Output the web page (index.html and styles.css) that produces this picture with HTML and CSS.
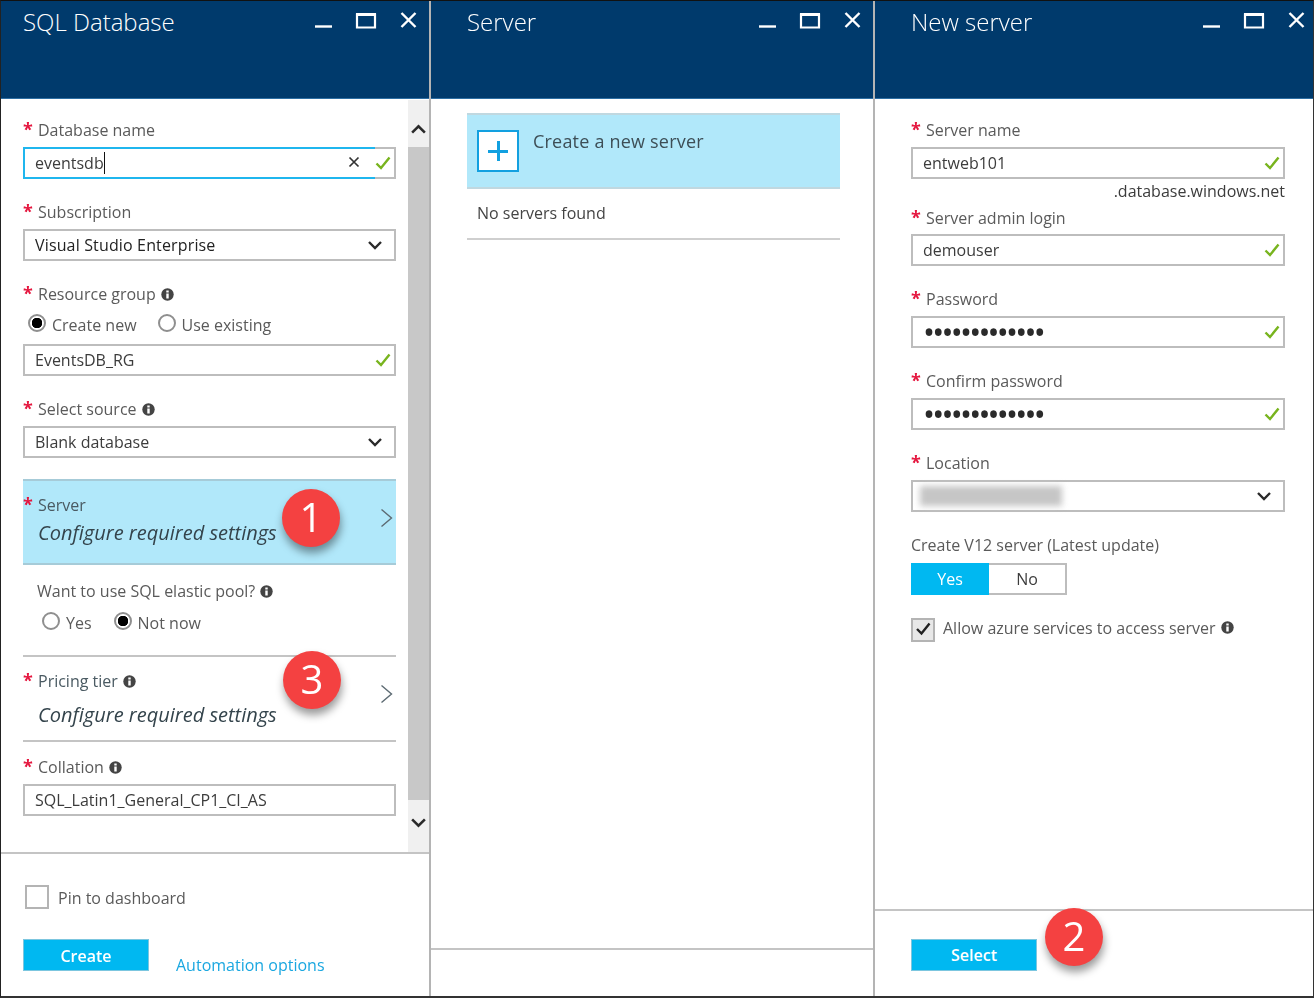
FILE: index.html
```html
<!DOCTYPE html>
<html>
  <head>
    <title>SQL Database</title>
    <meta charset="utf-8"/>
    <link rel="stylesheet" href="styles.css">
  </head>
  <body>
    <svg class="sprite" width="0" height="0">
      <symbol id="win" viewBox="0 0 102 20">
        <path d="M0 15.500h17" stroke="#fff" stroke-width="2.400" fill="none"/>
        <path d="M42 3.500h18v13h-18z" stroke="#fff" stroke-width="2.200" fill="none"/>
        <path d="M41 2h20v3h-20z" fill="#fff"/>
        <path d="M86.500 2l14 14M100.500 2l-14 14" stroke="#fff" stroke-width="2.400" fill="none"/>
      </symbol>
      <symbol id="check" viewBox="0 0 16 14">
        <path d="M1.500 7.500l4.500 4.500 8.500-10.500" stroke="#78b41e" stroke-width="2.400" fill="none"/>
      </symbol>
      <symbol id="clear" viewBox="0 0 12 12">
        <path d="M1.500 1.500l9 9M10.500 1.500l-9 9" stroke="#333" stroke-width="1.700" fill="none"/>
      </symbol>
      <symbol id="down" viewBox="0 0 16 10">
        <path d="M2 2l6 6 6-6" stroke="#2a2a2a" stroke-width="2.400" fill="none"/>
      </symbol>
      <symbol id="chev" viewBox="0 0 13 20">
        <path d="M1.500 1.500l10 8.500-10 8.500" stroke="#5c6a72" stroke-width="1.400" fill="none"/>
      </symbol>
      <symbol id="info" viewBox="0 0 13 13">
        <circle cx="6.500" cy="6.500" r="6.200" fill="#444"/>
        <path d="M5.300 2.500h2.400v2h-2.400zM5.300 5.500h2.400v5h-2.400z" fill="#fff"/>
      </symbol>
    </svg>

    <div class="desk">

      <section class="panel panel-db">
        <header class="head">
          <h1>SQL Database</h1>
          <svg class="win"><use href="#win"/></svg>
        </header>
        <div class="body">
          <div class="form">
            <div class="label first"><span class="star">*</span>Database name</div>
            <div class="input focus">
              <span class="caret">eventsdb</span>
              <svg class="clear"><use href="#clear"/></svg>
              <svg class="check"><use href="#check"/></svg>
            </div>

            <div class="label"><span class="star">*</span>Subscription</div>
            <div class="input strong">Visual Studio Enterprise<svg class="down"><use href="#down"/></svg></div>

            <div class="label"><span class="star">*</span>Resource group<svg class="info"><use href="#info"/></svg></div>
            <div class="radios">
              <span class="radio on">Create new</span>
              <span class="radio">Use existing</span>
            </div>
            <div class="input">EventsDB_RG<svg class="check"><use href="#check"/></svg></div>

            <div class="label"><span class="star">*</span>Select source<svg class="info"><use href="#info"/></svg></div>
            <div class="input">Blank database<svg class="down"><use href="#down"/></svg></div>

            <div class="blade active">
              <div>
                <div class="blade-label"><span class="star">*</span>Server</div>
                <div class="blade-note">Configure required settings</div>
              </div>
              <svg class="chev"><use href="#chev"/></svg>
            </div>

            <div class="pool">Want to use SQL elastic pool?<svg class="info"><use href="#info"/></svg></div>
            <div class="radios radios-pool">
              <span class="radio">Yes</span>
              <span class="radio on">Not now</span>
            </div>

            <div class="blade priced">
              <div>
                <div class="blade-label"><span class="star">*</span>Pricing tier<svg class="info"><use href="#info"/></svg></div>
                <div class="blade-note">Configure required settings</div>
              </div>
              <svg class="chev"><use href="#chev"/></svg>
            </div>

            <div class="label collation"><span class="star">*</span>Collation<svg class="info"><use href="#info"/></svg></div>
            <div class="input">SQL_Latin1_General_CP1_CI_AS</div>
          </div>
          <div class="scroll">
            <div class="scroll-btn up"><svg><use href="#down"/></svg></div>
            <div class="scroll-thumb"></div>
            <div class="scroll-btn dn"><svg><use href="#down"/></svg></div>
          </div>
        </div>
        <footer class="foot foot-db">
          <div class="pin"><span class="box"></span><span class="pin-text">Pin to dashboard</span></div>
          <div class="actions">
            <a class="btn">Create</a>
            <a class="link">Automation options</a>
          </div>
        </footer>
      </section>

      <section class="panel panel-list">
        <header class="head">
          <h1>Server</h1>
          <svg class="win"><use href="#win"/></svg>
        </header>
        <div class="body list">
          <div class="create">
            <span class="plus"></span>
            <span class="create-text">Create a new server</span>
          </div>
          <div class="empty">No servers found</div>
        </div>
        <footer class="foot foot-list"></footer>
      </section>

      <section class="panel panel-new">
        <header class="head">
          <h1>New server</h1>
          <svg class="win"><use href="#win"/></svg>
        </header>
        <div class="body form-new">
          <div class="label first"><span class="star">*</span>Server name</div>
          <div class="input">entweb101<svg class="check"><use href="#check"/></svg></div>
          <div class="suffix">.database.windows.net</div>

          <div class="label tight"><span class="star">*</span>Server admin login</div>
          <div class="input">demouser<svg class="check"><use href="#check"/></svg></div>

          <div class="label"><span class="star">*</span>Password</div>
          <div class="input"><span class="dots">•••••••••••••</span><svg class="check"><use href="#check"/></svg></div>

          <div class="label"><span class="star">*</span>Confirm password</div>
          <div class="input"><span class="dots">•••••••••••••</span><svg class="check"><use href="#check"/></svg></div>

          <div class="label"><span class="star">*</span>Location</div>
          <div class="input"><span class="smudge"></span><svg class="down"><use href="#down"/></svg></div>

          <div class="plain">Create V12 server (Latest update)</div>
          <div class="toggle">
            <span class="opt sel">Yes</span>
            <span class="opt">No</span>
          </div>

          <div class="allow">
            <span class="box ticked"><svg viewBox="0 0 16 14"><path d="M2 7l4.500 4.500 8-10" stroke="#222" stroke-width="2.400" fill="none"/></svg></span>
            Allow azure services to access server<svg class="info"><use href="#info"/></svg>
          </div>
        </div>
        <footer class="foot foot-new">
          <a class="btn">Select</a>
        </footer>
      </section>

      <div class="badge b1">1</div>
      <div class="badge b3">3</div>
      <div class="badge b2">2</div>
    </div>
  </body>
</html>
```

FILE: styles.css
```css
*, *::before {
  box-sizing: border-box;
}
html, body {
  margin: 0;
  height: 998px;
  overflow: hidden;
}
body {
  background: #fff;
  color: #5a5a5a;
  font-family: "Open Sans", "Noto Sans", sans-serif;
  font-size: 16px;
}
.sprite {
  position: absolute;
}
.desk {
  position: relative;
  display: flex;
  height: 998px;
  border-top: 1px solid #111;
  border-left: 1px solid #222;
  border-right: 1px solid #333;
  border-bottom: 2px solid #333;
  filter: blur(0.5px);
}
.panel {
  display: flex;
  flex-direction: column;
  border-right: 2px solid #b4b4b4;
}
.panel-db {
  width: 430px;
}
.panel-list {
  width: 444px;
}
.panel-new {
  width: 438px;
  border-right: 0;
}

/* header */
.head {
  display: flex;
  flex: none;
  height: 98px;
  background: #003a6c;
  border-bottom: 1px solid #2d6ea3;
  padding-left: 36px;
}
.panel-db .head {
  padding-left: 22px;
}
.head h1 {
  margin: 5px 0 0;
  color: #fff;
  font-size: 24px;
  font-weight: 300;
  line-height: 32px;
}
.win {
  width: 102px;
  height: 20px;
  margin: 10px 12px 0 auto;
}
.panel-new .win {
  margin-right: 8px;
}

/* form */
.body {
  display: flex;
  flex: 1;
  min-height: 0;
}
.form {
  width: 407px;
  padding: 0 12px 0 22px;
}
.label {
  display: flex;
  align-items: center;
  height: 20px;
  margin: 23px 0 7px;
  line-height: 20px;
  white-space: nowrap;
}
.label.first {
  margin-top: 21px;
}
.star {
  flex: none;
  width: 15px;
  margin-top: -2px;
  color: #e5173f;
  font-size: 18px;
  font-weight: 700;
  line-height: 20px;
}
.info {
  flex: none;
  width: 13px;
  height: 13px;
  margin-left: 5px;
}
.input {
  display: flex;
  align-items: center;
  height: 32px;
  padding-left: 10px;
  border: 2px solid #bdbdbd;
  color: #3c3c3c;
  white-space: nowrap;
}
.input.strong {
  color: #222;
  letter-spacing: 0.15px;
}
.input.focus {
  border-image: linear-gradient(to right, #1fb6ee 353px, #bdbdbd 353px) 1;
}
.caret {
  border-right: 1px solid #111;
}
.clear {
  flex: none;
  width: 12px;
  height: 12px;
  margin: -2px 15px 0 auto;
}
.check {
  flex: none;
  width: 16px;
  height: 14px;
  margin-left: auto;
  margin-right: 3px;
}
.clear + .check {
  margin-left: 0;
}
.down {
  flex: none;
  width: 16px;
  height: 10px;
  margin-left: auto;
  margin-right: 11px;
}

/* radios */
.radios {
  display: flex;
  gap: 21px;
  height: 20px;
  margin: 11px 0 9px 5px;
  line-height: 20px;
}
.radio {
  display: flex;
  align-items: center;
  gap: 6px;
}
.radio::before {
  content: "";
  flex: none;
  width: 18px;
  height: 18px;
  margin-top: -4px;
  border: 2px solid #8f8f8f;
  border-radius: 50%;
  background: #fff;
}
.radio.on::before {
  background: radial-gradient(circle, #000 0, #000 5px, #fff 5.500px);
}
.radios-pool {
  gap: 22px;
  margin: 12px 0 0 19px;
}

/* blades */
.blade {
  display: flex;
  justify-content: space-between;
  align-items: flex-start;
  padding-top: 14px;
  color: #4a5a62;
}
.blade.active {
  height: 86px;
  margin-top: 21px;
  background: #b1e8fa;
  border-top: 2px solid #a6cbd8;
  border-bottom: 2px solid #a6cbd8;
}
.blade.priced {
  height: 87px;
  margin-top: 22px;
  border-top: 2px solid #c4c4c4;
  border-bottom: 2px solid #c4c4c4;
}
.blade-label {
  display: flex;
  align-items: center;
  height: 20px;
}
.blade-note {
  margin: 4px 0 0 15px;
  color: #34444c;
  font-size: 20px;
  font-style: italic;
  line-height: 28px;
  white-space: nowrap;
}
.priced .blade-note {
  margin-top: 10px;
}
.chev {
  width: 13px;
  height: 20px;
  margin: 13px 3px 0 0;
}
.pool {
  display: flex;
  align-items: center;
  height: 20px;
  margin: 16px 0 0 14px;
}
.label.collation {
  margin-top: 15px;
}

/* scrollbar */
.scroll {
  display: flex;
  flex: none;
  flex-direction: column;
  width: 21px;
  margin-top: 1px;
  background: #f0f0f0;
}
.scroll-thumb {
  flex: 1;
  background: #c8c8c8;
}
.scroll-btn {
  display: flex;
  flex: none;
  justify-content: center;
  align-items: center;
  height: 47px;
}
.scroll-btn svg {
  width: 17px;
  height: 11px;
}
.scroll-btn.up {
  padding-top: 11px;
}
.scroll-btn.up svg {
  transform: scaleY(-1);
}
.scroll-btn.dn {
  height: 52px;
  padding-bottom: 8px;
}

/* footers */
.foot {
  flex: none;
  border-top: 2px solid #c4c4c4;
}
.foot-db {
  height: 144px;
  padding: 31px 22px 0;
}
.foot-list {
  height: 48px;
}
.foot-new {
  height: 87px;
  padding: 28px 0 0 36px;
}
.box {
  display: inline-block;
  flex: none;
  width: 24px;
  height: 24px;
  border: 2px solid #b4b4b4;
}
.pin {
  display: flex;
  align-items: center;
  gap: 9px;
  margin-left: 2px;
}
.pin-text {
  margin-top: 2px;
}
.actions {
  display: flex;
  margin-top: 30px;
}
.btn {
  display: block;
  width: 126px;
  height: 32px;
  background: #00b8f1;
  border: 1px solid #7cc6df;
  color: #fff;
  font-weight: 600;
  line-height: 30px;
  text-align: center;
}
.foot-db .btn {
  line-height: 33px;
}
.link {
  margin: 15px 0 0 27px;
  color: #1aa7e0;
  line-height: 22px;
  white-space: nowrap;
}

/* server list */
.list {
  flex-direction: column;
  padding: 14px 33px 0 36px;
}
.create {
  display: flex;
  gap: 14px;
  height: 76px;
  padding: 15px 0 0 10px;
  background: #b1e8fa;
  border-top: 2px solid #c0d8e0;
  border-bottom: 2px solid #c0d8e0;
  color: #3d4e56;
}
.plus {
  flex: none;
  width: 42px;
  height: 42px;
  border: 2px solid #12a0e0;
  background:
    linear-gradient(#12a0e0, #12a0e0) center / 20px 3px no-repeat,
    linear-gradient(#12a0e0, #12a0e0) center / 3px 20px no-repeat,
    #fff;
}
.create-text {
  margin-top: -1px;
  font-size: 18px;
  letter-spacing: 0.2px;
  line-height: 24px;
}
.empty {
  height: 51px;
  padding-left: 10px;
  border-bottom: 2px solid #cfcfcf;
  color: #444;
  line-height: 48px;
}

/* new server form */
.form-new {
  display: block;
  padding: 0 28px 0 36px;
}
.suffix {
  height: 22px;
  color: #3c3c3c;
  line-height: 24px;
  text-align: right;
}
.label.tight {
  margin: 7px 0 6px;
}
.dots {
  color: #2a2a2a;
  font-size: 32px;
  letter-spacing: -2.800px;
  line-height: 20px;
}
.smudge {
  width: 142px;
  height: 20px;
  margin-left: -3px;
  background: #c6c6c6;
  filter: blur(3px);
}
.plain {
  height: 20px;
  margin-top: 23px;
  line-height: 20px;
}
.toggle {
  display: flex;
  width: 156px;
  height: 32px;
  margin-top: 8px;
  border: 2px solid #bdbdbd;
  color: #3c3c3c;
  line-height: 28px;
  text-align: center;
}
.opt {
  flex: 1;
}
.opt.sel {
  flex: none;
  width: 78px;
  margin: -2px 0 -2px -2px;
  background: #00b8f1;
  color: #fff;
  line-height: 32px;
}
.allow {
  display: flex;
  align-items: flex-start;
  margin-top: 23px;
  line-height: 20px;
  white-space: nowrap;
}
.allow .info {
  margin-top: 3px;
}
.box.ticked {
  margin-right: 8px;
  padding: 2px;
  background: #e8e8e8;
}
.box.ticked svg {
  display: block;
}

/* callouts */
.badge {
  position: absolute;
  width: 58px;
  height: 58px;
  border-radius: 50%;
  background: #f44141;
  box-shadow: 1px 6px 8px rgba(0, 0, 0, 0.4);
  color: #fff;
  font-size: 40px;
  line-height: 56px;
  text-align: center;
}
.b1 {
  left: 281px;
  top: 488px;
}
.b3 {
  left: 282px;
  top: 650px;
}
.b2 {
  left: 1044px;
  top: 907px;
}
```
